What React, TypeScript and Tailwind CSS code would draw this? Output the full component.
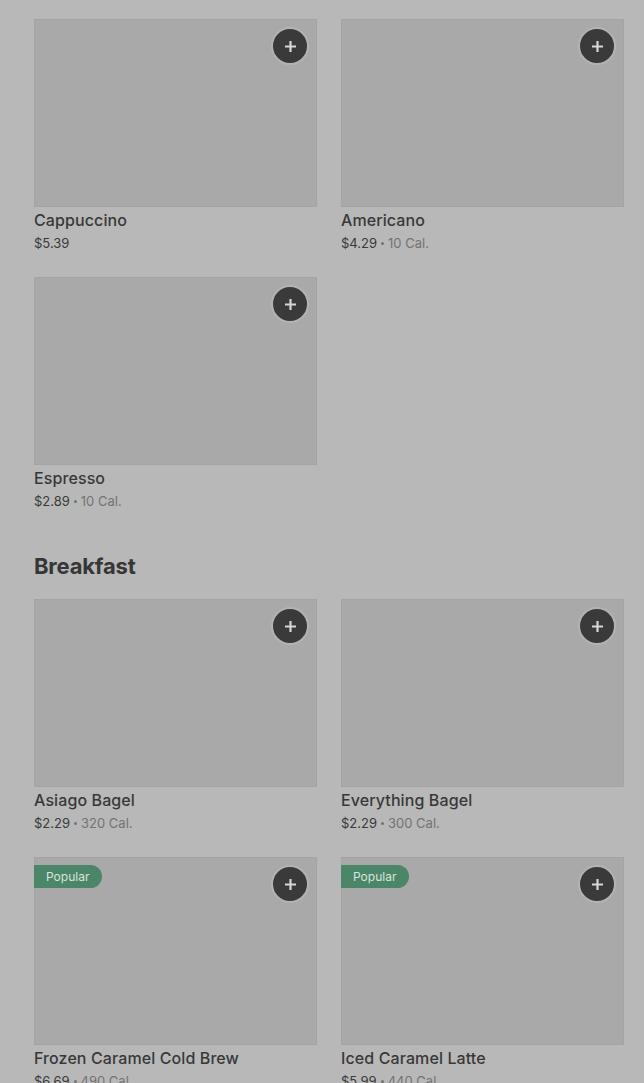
import React from "react";

type Item = { name: string; price: string; cal?: string; popular?: boolean };

const row1: Item[] = [
  { name: "Cappuccino", price: "$5.39" },
  { name: "Americano", price: "$4.29", cal: "10 Cal." },
  { name: "Espresso", price: "$2.89", cal: "10 Cal." },
];

const breakfast: Item[] = [
  { name: "Asiago Bagel", price: "$2.29", cal: "320 Cal." },
  { name: "Everything Bagel", price: "$2.29", cal: "300 Cal." },
  { name: "Frozen Caramel Cold Brew", price: "$6.69", cal: "490 Cal.", popular: true },
  { name: "Iced Caramel Latte", price: "$5.99", cal: "440 Cal.", popular: true },
];

function Card({ item }: { item: Item }) {
  return (
    <div className="flex flex-col">
      <div className="relative h-[188px] shrink-0 bg-[#a9a9a9] border border-[#a4a4a4]">
        {item.popular && (
          <div className="absolute left-[-1px] top-[7px] h-[23px] pl-3 pr-[13px] flex items-center rounded-r-full bg-[#4a8667] text-[12px] text-[#d9e4dd]">
            Popular
          </div>
        )}
        <button className="absolute right-[7px] top-[7px] w-[38px] h-[38px] rounded-full bg-[#3a3a3a] border-2 border-[#b3b3b3] flex items-center justify-center">
          <svg width="13" height="13" viewBox="0 0 13 13">
            <path d="M6.5 1v11M1 6.5h11" stroke="#d6d6d6" strokeWidth="2.2" />
          </svg>
        </button>
      </div>
      <div className="mt-[1px] h-6 text-[16px] leading-6 font-medium text-[#383838] tracking-[0.1px] whitespace-nowrap">
        {item.name}
      </div>
      <div className="h-[22px] flex items-center text-[13px] leading-[22px] text-[#3a3a3a] whitespace-nowrap">
        <span>{item.price}</span>
        {item.cal && (
          <>
            <span className="mx-[4px] inline-block w-[3px] h-[3px] rounded-full bg-[#737373]" />
            <span className="text-[#737373]">{item.cal}</span>
          </>
        )}
      </div>
    </div>
  );
}

export default function App() {
  return (
    <div
      className="w-[644px] h-[1083px] bg-[#b8b8b8] overflow-hidden"
      style={{ fontFamily: "Inter, 'Noto Sans', sans-serif" }}
    >
      <div className="pl-[34px] pr-[20px] pt-[19px]">
        <div className="grid grid-cols-2 gap-x-[24px] gap-y-[23px]">
          {row1.map((it) => (
            <Card key={it.name} item={it} />
          ))}
        </div>
        <h2 className="mt-[40px] h-7 text-[22px] leading-7 font-bold text-[#363636] tracking-[-0.2px]">Breakfast</h2>
        <div className="mt-[19px] grid grid-cols-2 gap-x-[24px] gap-y-[23px]">
          {breakfast.map((it) => (
            <Card key={it.name} item={it} />
          ))}
        </div>
      </div>
    </div>
  );
}
